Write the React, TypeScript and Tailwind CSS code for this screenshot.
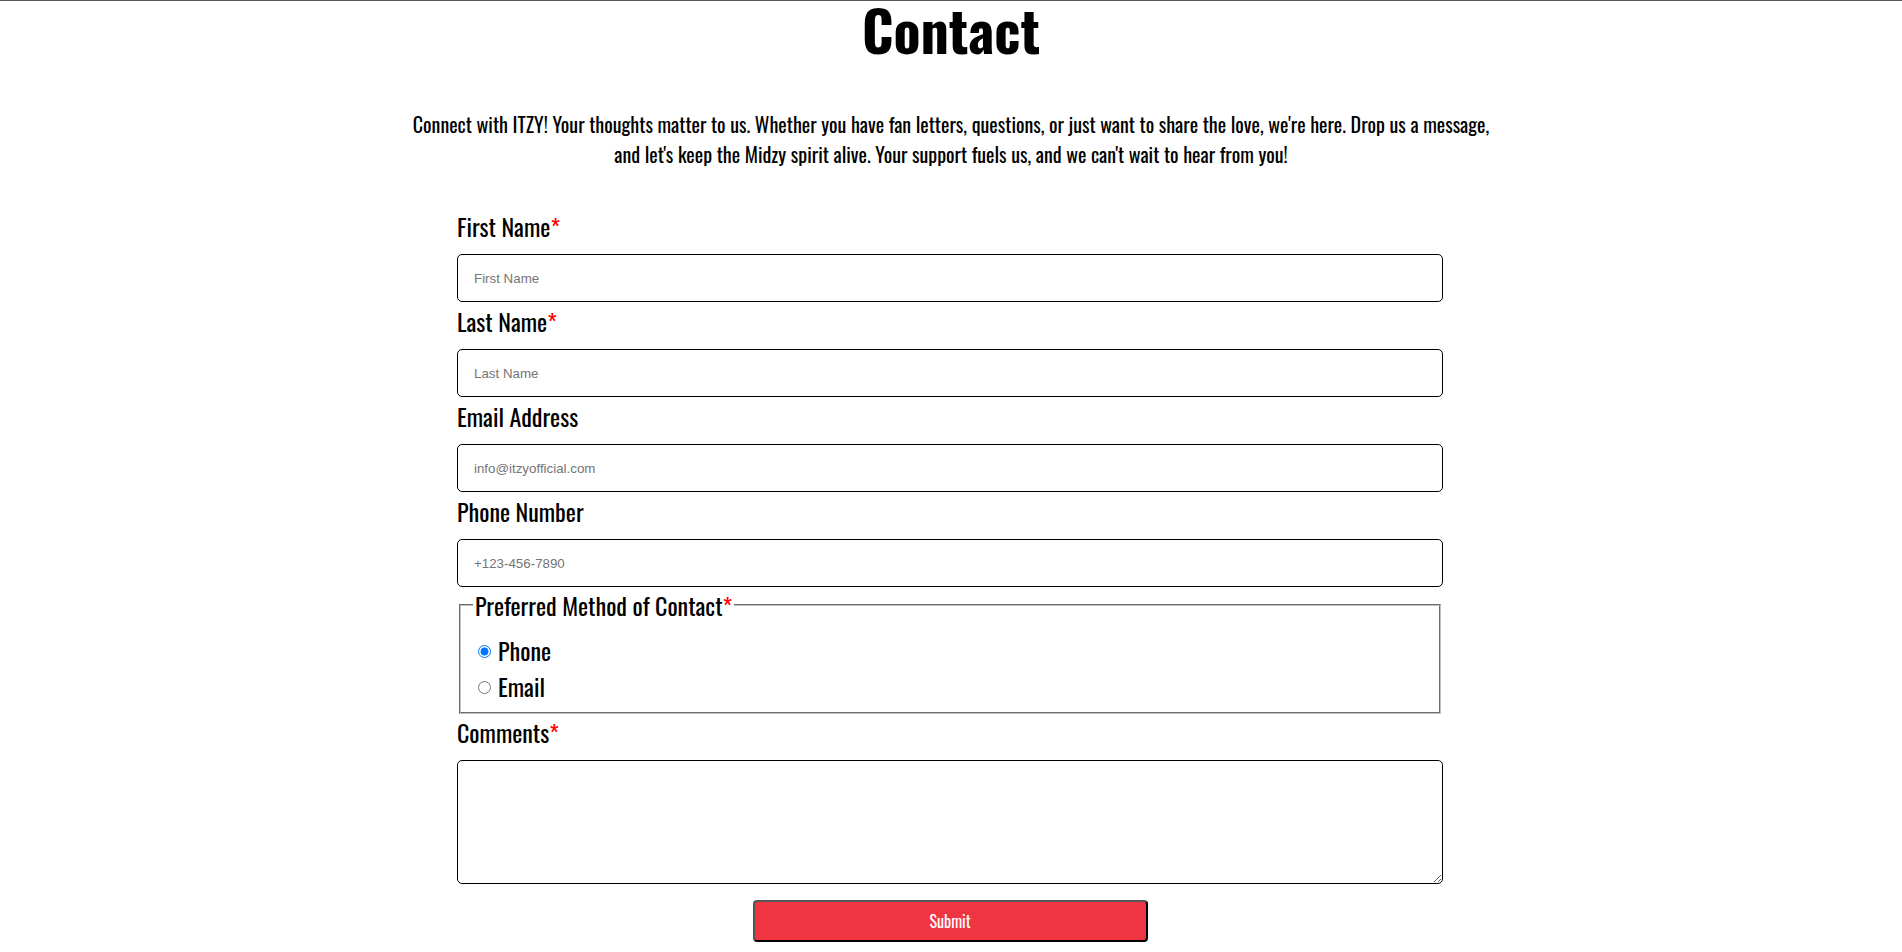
const labelFont =
  "font-['Oswald','Liberation_Sans_Narrow','DejaVu_Sans_Condensed','Roboto_Condensed',sans-serif] [font-stretch:condensed]";

const fields = [
  { label: "First Name", placeholder: "First Name", required: true, type: "text" },
  { label: "Last Name", placeholder: "Last Name", required: true, type: "text" },
  { label: "Email Address", placeholder: "info@itzyofficial.com", required: false, type: "email" },
  { label: "Phone Number", placeholder: "+123-456-7890", required: false, type: "tel" },
];

const Star = () => <span className="text-[#ff0000]">*</span>;

export default function App() {
  return (
    <div className={`min-h-screen bg-white border-t border-[#555] text-black ${labelFont}`}>
      <h1 className="text-center text-[56px] font-bold leading-[56px]">Contact</h1>

      <p className="mt-[52px] text-center text-[20px] leading-[30px]">
        Connect with ITZY! Your thoughts matter to us. Whether you have fan letters, questions, or just want to share the love, we're here. Drop us a message,
        <br />
        and let's keep the Midzy spirit alive. Your support fuels us, and we can't wait to hear from you!
      </p>

      <div className="flex justify-center pr-[2px] mt-[38px]">
        <form className="w-[986px]" onSubmit={(e) => e.preventDefault()}>
          {fields.map((f) => (
            <div key={f.label} className="flex flex-col">
              <label className="text-[24px] leading-[32px] mt-[3px] mb-[12px]">
                {f.label}
                {f.required && <Star />}
              </label>
              <input
                type={f.type}
                placeholder={f.placeholder}
                className="h-[48px] w-full border border-black rounded-[5px] pl-4 font-['Liberation_Sans',Arial,sans-serif] text-[13.333px] placeholder:text-[#757575] outline-none"
              />
            </div>
          ))}

          <fieldset className="mx-[2px] mt-[4px] border-2 [border-style:groove] border-[#c0c0c0] px-[12px] pt-[13px] pb-[8px] text-[16px]">
            <legend className="px-[2px] text-[24px] leading-[28px]">
              Preferred Method of Contact
              <Star />
            </legend>
            <div className="flex flex-col text-[24px] leading-[36px]">
              <label className="flex items-center">
                <input type="radio" name="method" defaultChecked className="w-[13px] h-[13px] m-[3px_3px_0_5px]" />
                <span className="ml-[4px]">Phone</span>
              </label>
              <label className="flex items-center">
                <input type="radio" name="method" className="w-[13px] h-[13px] m-[3px_3px_0_5px]" />
                <span className="ml-[4px]">Email</span>
              </label>
            </div>
          </fieldset>

          <div className="flex flex-col">
            <label className="text-[24px] leading-[32px] mt-[2px] mb-[12px]">
              Comments
              <Star />
            </label>
            <textarea className="h-[124px] w-full border border-black rounded-[5px] p-2 font-['Liberation_Sans',Arial,sans-serif] text-[13.333px] outline-none" />
          </div>

          <div className="flex justify-center mt-[16px]">
            <button
              type="submit"
              className="w-[395px] h-[42px] bg-[#ef3442] text-white text-[16px] rounded-[4px] border-2 border-t-[#555] border-l-[#555] border-b-black border-r-black"
            >
              Submit
            </button>
          </div>
        </form>
      </div>
    </div>
  );
}
